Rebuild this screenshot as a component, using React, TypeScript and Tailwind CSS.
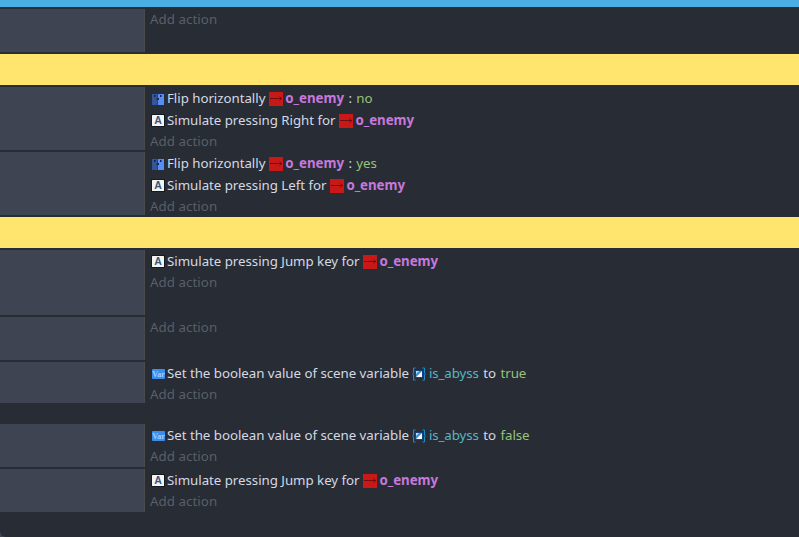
import React from 'react';
import clsx from 'clsx';

interface Action {
  kind: 'flip' | 'key' | 'variable';
  text: string;
  object?: string;
  variable?: string;
  joiner?: string;
  value?: string;
}

interface EventRow {
  type: 'event' | 'comment';
  height: string;
  actions?: Action[];
}

const rows: EventRow[] = [
  { type: 'event', height: 'h-[43px]', actions: [] },
  { type: 'comment', height: 'h-[31px]' },
  {
    type: 'event',
    height: 'h-[63px]',
    actions: [
      { kind: 'flip', text: 'Flip horizontally', object: 'o_enemy', joiner: ':', value: 'no' },
      { kind: 'key', text: 'Simulate pressing Right for', object: 'o_enemy' },
    ],
  },
  {
    type: 'event',
    height: 'h-[63px]',
    actions: [
      { kind: 'flip', text: 'Flip horizontally', object: 'o_enemy', joiner: ':', value: 'yes' },
      { kind: 'key', text: 'Simulate pressing Left for', object: 'o_enemy' },
    ],
  },
  { type: 'comment', height: 'h-[31px]' },
  {
    type: 'event',
    height: 'h-[65px]',
    actions: [{ kind: 'key', text: 'Simulate pressing Jump key for', object: 'o_enemy' }],
  },
  { type: 'event', height: 'h-[43px]', actions: [] },
  {
    type: 'event',
    height: 'h-[41px] mb-[19px]',
    actions: [
      { kind: 'variable', text: 'Set the boolean value of scene variable', variable: 'is_abyss', joiner: 'to', value: 'true' },
    ],
  },
  {
    type: 'event',
    height: 'h-[43px]',
    actions: [
      { kind: 'variable', text: 'Set the boolean value of scene variable', variable: 'is_abyss', joiner: 'to', value: 'false' },
    ],
  },
  {
    type: 'event',
    height: 'h-[43px]',
    actions: [{ kind: 'key', text: 'Simulate pressing Jump key for', object: 'o_enemy' }],
  },
];

const FlipIcon = () => (
  <svg width="12" height="12" viewBox="0 0 12 12" className="ml-px shrink-0">
    <path d="M0 1h5.500v4H4.500v2h1v5H0z" fill="#34579a" />
    <path d="M6 1h6v11H6V7h1V5H6z" fill="#568df8" />
    <rect x="2" y="2" width="1.500" height="2" fill="#17264a" />
    <rect x="8" y="2" width="1.500" height="2" fill="#17264a" />
  </svg>
);

const KeyIcon = () => (
  <svg width="14" height="13" viewBox="0 0 14 13" className="shrink-0">
    <rect width="14" height="13" rx="1" fill="#16191f" />
    <rect x="1" y="1" width="12" height="11" rx="0.500" fill="#f4f4f2" />
    <text x="7" y="10.300" textAnchor="middle" fontSize="10.500" fontWeight="700" fontFamily="Liberation Sans, sans-serif" fill="#36577f">
      A
    </text>
  </svg>
);

const VariableIcon = () => (
  <svg width="13" height="10" viewBox="0 0 13 10" className="ml-px shrink-0">
    <rect width="13" height="10" rx="1" fill="#3b8df0" />
    <text x="6.500" y="7.700" textAnchor="middle" fontSize="8" fontWeight="700" fontFamily="Liberation Serif, serif" fill="#a5cdfb">
      Var
    </text>
  </svg>
);

const SpriteIcon = () => (
  <svg width="14" height="14" viewBox="0 0 14 14" className="shrink-0">
    <rect width="14" height="14" fill="#c91818" />
    <path d="M1 6.500h12M10.500 4.500l2 2-2 2" fill="none" stroke="#650b0d" strokeWidth="0.900" />
  </svg>
);

const BooleanIcon = () => (
  <svg width="14" height="14" viewBox="0 0 14 14" className="shrink-0">
    <path d="M3.500 1H1.500v5L.5 7l1 1v5h2M10.500 1h2v5l1 1-1 1v5h-2" fill="none" stroke="#1a8fd0" />
    <rect x="2.500" y="3" width="9" height="8" fill="#12457f" />
    <path d="M4 4h6L4 10z" fill="#3c8bdc" />
    <path d="M10 4v6H4z" fill="#f4f8ff" />
    <path d="M4 4h3L4 7z" fill="#bcdcff" />
  </svg>
);

const kindIcons = {
  flip: <FlipIcon />,
  key: <KeyIcon />,
  variable: <VariableIcon />,
};

const ActionLine = ({ action }: { action: Action }) => (
  <div className="flex h-[22px] items-center whitespace-pre pt-px text-[#d4d9e4]">
    <span className="flex w-[17px] pl-px">{kindIcons[action.kind]}</span>
    <span>{action.text} </span>
    {action.object && (
      <>
        <SpriteIcon />
        <span className="pl-[2.5px] font-bold text-[#c678dd]">{action.object}</span>
      </>
    )}
    {action.variable && (
      <>
        <BooleanIcon />
        <span className="pl-[2.5px] tracking-[-0.100px] text-[#56b6c2]">{action.variable}</span>
      </>
    )}
    {action.joiner && <span className="px-px"> {action.joiner} </span>}
    {action.value && <span className="text-[#98c379]">{action.value}</span>}
  </div>
);

const App: React.FC = () => {
  return (
    <div className="h-[537px] w-[799px] overflow-hidden bg-[#3e4451] font-['Noto_Sans',sans-serif] text-[13.3px] tracking-[-0.035px]">
      <div className="flex h-full flex-col gap-[2px] rounded-bl-[6px] bg-[#282c34]">
        <div className="h-[7px] shrink-0 bg-[#4aaee3]" />
        {rows.map((row, i) =>
          row.type === 'comment' ? (
            <div key={i} className={clsx('shrink-0 bg-[#ffe56d]', row.height)} />
          ) : (
            <div key={i} className={clsx('flex shrink-0', row.height)}>
              <div className="w-[145px] border-r border-[#4b4b4b] bg-[#3e4451]" />
              <div className="flex-1 pl-[5px]">
                {row.actions?.map((action, j) => <ActionLine key={j} action={action} />)}
                <div className="h-5 leading-5 tracking-[0.060px] text-[#5a5f69]">Add action</div>
              </div>
            </div>
          ),
        )}
      </div>
    </div>
  );
};

export default App;
